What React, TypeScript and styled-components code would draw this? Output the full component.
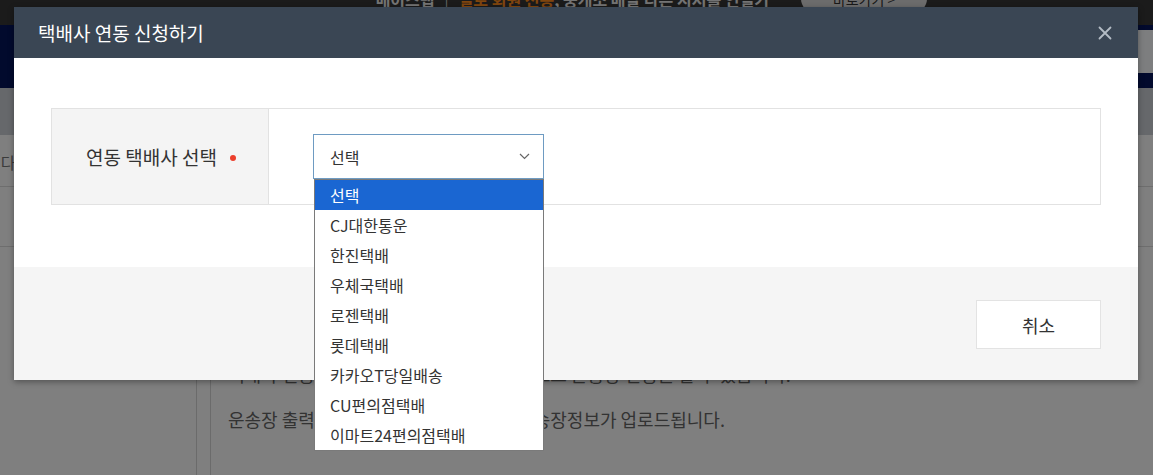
import React from "react";
import styled, { createGlobalStyle } from "styled-components";

const Global = createGlobalStyle`
  html, body { margin: 0; padding: 0; height: 100%; overflow: hidden; }
  body { font-family: "Noto Sans CJK KR", "Noto Sans", sans-serif; background: #fff; }
  * { box-sizing: border-box; }
`;

const Page = styled.div`
  position: relative;
  width: 100vw;
  height: 100vh;
  display: flex;
  flex-direction: column;
  overflow: hidden;
  background: #fff;
`;

const TopBanner = styled.div`
  height: 25px;
  background: #363636;
  display: flex;
  justify-content: center;
  overflow: hidden;
  flex-shrink: 0;
`;

const BannerInner = styled.div`
  margin-top: -14px;
  margin-left: 150px;
  display: flex;
  align-items: center;
  gap: 10px;
  color: #e8e8e8;
  font-size: 16px;
  font-weight: 700;
  height: 26px;
  white-space: nowrap;
`;

const Orange = styled.span`
  color: #ff8a1c;
`;

const Pill = styled.span`
  margin-left: 22px;
  background: #d8d8d8;
  color: #333;
  border-radius: 14px;
  padding: 0 32px;
  height: 26px;
  line-height: 26px;
  font-size: 14px;
  font-weight: 400;
`;

const NavBar = styled.div`
  height: 63px;
  background: #04145a;
  display: flex;
  justify-content: flex-end;
  align-items: flex-start;
  padding-top: 5px;
  flex-shrink: 0;
`;

const NavButton = styled.div`
  width: 16px;
  height: 43px;
  background: #fbfcff;
`;

const SubBar = styled.div`
  height: 47px;
  background: #cdd0d6;
  flex-shrink: 0;
`;

const Row = styled.div<{ $h: number }>`
  height: ${(p) => p.$h}px;
  border-bottom: 1px solid #dcdcdc;
  display: flex;
  align-items: center;
  flex-shrink: 0;
  font-size: 16px;
  color: #777;
  overflow: hidden;
`;

const Clipped = styled.span`
  margin-left: -14px;
  padding-top: 2px;
`;

const Lower = styled.div`
  flex: 1;
  display: grid;
  grid-template-columns: 197px 14px 1fr;
`;

const SideCol = styled.div`
  border-right: 1px solid #d6d6d6;
`;

const MainCol = styled.div`
  padding: 114px 0 0 17px;
  display: flex;
  flex-direction: column;
  gap: 18px;
  color: #666;
  font-size: 18px;
  line-height: 27px;
  white-space: nowrap;
`;

const Dim = styled.div`
  position: absolute;
  inset: 0;
  background: rgba(0, 0, 0, 0.5);
`;

const Modal = styled.div`
  position: absolute;
  top: 7px;
  left: 14px;
  width: 1124px;
  background: #fff;
  box-shadow: 0 2px 6px rgba(0, 0, 0, 0.35);
  display: flex;
  flex-direction: column;
`;

const Header = styled.div`
  height: 51px;
  background: #3a4654;
  display: flex;
  align-items: center;
  justify-content: space-between;
  padding: 0 26px 0 24px;
`;

const Title = styled.h1`
  margin: 0;
  font-size: 19px;
  font-weight: 400;
  color: #fff;
  letter-spacing: 0px;
`;

const CloseBtn = styled.button`
  border: 0;
  background: none;
  padding: 0;
  width: 14px;
  height: 14px;
  display: flex;
  cursor: pointer;
`;

const Body = styled.div`
  padding: 50px 37px 62px;
`;

const FormTable = styled.div`
  display: grid;
  grid-template-columns: 217px 1fr;
  border: 1px solid #e2e2e2;
  height: 97px;
`;

const LabelCell = styled.div`
  background: #f4f4f4;
  border-right: 1px solid #e2e2e2;
  display: flex;
  align-items: center;
  justify-content: center;
  gap: 13px;
  padding-left: 2px;
  font-size: 19px;
  color: #333;
`;

const RequiredDot = styled.span`
  width: 6px;
  height: 6px;
  border-radius: 50%;
  background: #ec3f2c;
  margin-top: 2px;
`;

const ValueCell = styled.div`
  display: flex;
  align-items: center;
  padding-left: 44px;
`;

const SelectWrap = styled.div`
  position: relative;
  width: 231px;
`;

const SelectBox = styled.div`
  height: 45px;
  border: 1px solid #6e9bc2;
  display: flex;
  align-items: center;
  justify-content: space-between;
  padding: 0 13px 0 16px;
  font-size: 16px;
  color: #333;
  background: #fff;
`;

const OptionList = styled.ul`
  position: absolute;
  top: 45px;
  left: 1px;
  width: 230px;
  margin: 0;
  padding: 0;
  list-style: none;
  background: #fff;
  border: 1px solid #7a7a7a;
  z-index: 5;
`;

const OptionItem = styled.li<{ $active?: boolean }>`
  height: 30px;
  line-height: 30px;
  padding-left: 15px;
  font-size: 16px;
  color: ${(p) => (p.$active ? "#fff" : "#333")};
  background: ${(p) => (p.$active ? "#1a66d2" : "#fff")};
`;

const Footer = styled.div`
  height: 113px;
  background: #f5f5f5;
  display: flex;
  justify-content: flex-end;
  align-items: flex-start;
  padding: 33px 37px 0 0;
`;

const CancelBtn = styled.button`
  width: 125px;
  height: 49px;
  background: #fff;
  border: 1px solid #e3e3e3;
  font-family: inherit;
  font-size: 18px;
  color: #333;
  cursor: pointer;
`;

const options = [
  "선택",
  "CJ대한통운",
  "한진택배",
  "우체국택배",
  "로젠택배",
  "롯데택배",
  "카카오T당일배송",
  "CU편의점택배",
  "이마트24편의점택배",
];

export default function App() {
  return (
    <>
      <Global />
      <Page>
        <TopBanner>
          <BannerInner>
            <span>배이스탭</span>
            <span style={{ fontWeight: 300 }}>|</span>
            <span>
              <Orange>일로 회원 전용</Orange>, 중개소 배달 다른 시저를 인일기
            </span>
            <Pill>바로가기 &gt;</Pill>
          </BannerInner>
        </TopBanner>
        <NavBar>
          <NavButton />
        </NavBar>
        <SubBar />
        <Row $h={52}>
          <Clipped>니다</Clipped>
        </Row>
        <Row $h={60} />
        <Lower>
          <SideCol />
          <SideCol />
          <MainCol>
            <div>택배사 연동 신청 후 승인이 완료되면 자동으로 운송장 연동을 할 수 있습니다.</div>
            <div>운송장 출력 시 연동된 택배사로 자동으로 송장정보가 업로드됩니다.</div>
          </MainCol>
        </Lower>
        <Dim />
        <Modal>
          <Header>
            <Title>택배사 연동 신청하기</Title>
            <CloseBtn aria-label="닫기">
              <svg width="14" height="14" viewBox="0 0 14 14">
                <path d="M1.5 1.5 L12.5 12.5 M12.5 1.5 L1.5 12.5" stroke="#b4bcc5" strokeWidth="1.8" strokeLinecap="round" />
              </svg>
            </CloseBtn>
          </Header>
          <Body>
            <FormTable>
              <LabelCell>
                <span>연동 택배사 선택</span>
                <RequiredDot />
              </LabelCell>
              <ValueCell>
                <SelectWrap>
                  <SelectBox>
                    <span>선택</span>
                    <svg width="11" height="7" viewBox="0 0 11 7">
                      <path d="M1 1 L5.5 5.5 L10 1" fill="none" stroke="#666" strokeWidth="1.2" />
                    </svg>
                  </SelectBox>
                  <OptionList>
                    {options.map((o, i) => (
                      <OptionItem key={o} $active={i === 0}>
                        {o}
                      </OptionItem>
                    ))}
                  </OptionList>
                </SelectWrap>
              </ValueCell>
            </FormTable>
          </Body>
          <Footer>
            <CancelBtn>취소</CancelBtn>
          </Footer>
        </Modal>
      </Page>
    </>
  );
}
